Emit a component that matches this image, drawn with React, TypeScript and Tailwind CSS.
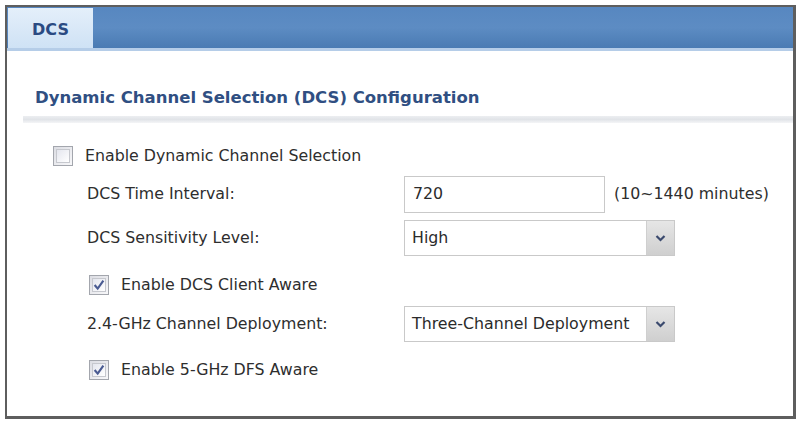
import React from "react";

const font = { fontFamily: "Tahoma, 'DejaVu Sans', 'Open Sans', sans-serif" };

const Checkbox = ({ checked }: { checked?: boolean }) => (
  <span className="flex h-[20px] w-[20px] items-center justify-center border border-[#a3a6ad] bg-gradient-to-br from-[#dcdde3] to-[#f7f7f9] p-[2px]">
    <span className="flex h-full w-full items-center justify-center border border-[#c6c8ce] bg-gradient-to-br from-[#e4e6ee] to-white">
      {checked && (
        <svg width="12" height="12" viewBox="0 0 11 11">
          <path d="M1.5 5.5 L4.3 8.8 L9.5 1.5" fill="none" stroke="#4a5b92" strokeWidth="2" />
        </svg>
      )}
    </span>
  </span>
);

const Select = ({ value }: { value: string }) => (
  <div className="flex h-[36px] w-[271px] border border-[#c9c9c9] bg-white">
    <div className="flex flex-1 items-center pl-[7px] text-[#2b2b2b]">{value}</div>
    <div className="flex w-[28px] items-center justify-center border-l border-[#cfcfcf] bg-gradient-to-b from-[#e6e6e6] to-[#cfcfcf]">
      <svg width="11" height="8" viewBox="0 0 11 8">
        <path d="M1.5 2 L5.5 6 L9.5 2" fill="none" stroke="#3b4a6e" strokeWidth="2.2" />
      </svg>
    </div>
  </div>
);

export default function App() {
  return (
    <div className="h-[421px] w-[801px] bg-white px-[5px] pb-[2px] pt-[5px]" style={font}>
      <div className="flex h-full flex-col border-2 border-[#5e5e5e] border-b-[3px] border-r-[3px]">
        {/* tab bar */}
        <div className="flex h-[44px] border-b-[3px] border-[#b5cde8] bg-gradient-to-b from-[#5787c0] via-[#5d8cc3] to-[#4a7bb3]">
          <div className="ml-[1px] mt-[1px] flex w-[85px] items-center justify-center bg-gradient-to-b from-[#e4effa] to-[#cfe2f5] pt-[3px] text-[16px] font-bold text-[#2a4a82]">
            DCS
          </div>
        </div>

        <div className="mt-[35px] pl-[28px] text-[16.5px] font-bold text-[#304f82]">
          Dynamic Channel Selection (DCS) Configuration
        </div>
        <div className="ml-[16px] mt-[5px] h-[7px] bg-gradient-to-b from-[#eceef1] via-[#e1e4e8] to-[#f4f5f7]" />

        <div className="flex flex-col text-[15.8px] text-[#2e2e2e]">
          <div className="mt-[15px] flex h-[37px] items-center gap-[12px] pl-[46px]">
            <Checkbox />
            <span>Enable Dynamic Channel Selection</span>
          </div>
          <div className="mt-[1px] flex h-[37px] items-center pl-[80px]">
            <span className="w-[317px]">DCS Time Interval:</span>
            <div className="flex h-[37px] w-[201px] items-center border border-[#c9c9c9] pl-[8px] text-[#2b2b2b]">720</div>
            <span className="ml-[9px]">(10~1440 minutes)</span>
          </div>
          <div className="mt-[7px] flex h-[36px] items-center pl-[80px]">
            <span className="w-[317px]">DCS Sensitivity Level:</span>
            <Select value="High" />
          </div>
          <div className="mt-[11px] flex h-[37px] items-center gap-[12px] pl-[82px]">
            <Checkbox checked />
            <span>Enable DCS Client Aware</span>
          </div>
          <div className="mt-[2px] flex h-[36px] items-center pl-[80px]">
            <span className="w-[317px]">2.4-GHz Channel Deployment:</span>
            <Select value="Three-Channel Deployment" />
          </div>
          <div className="mt-[10px] flex h-[37px] items-center gap-[12px] pl-[82px]">
            <Checkbox checked />
            <span>Enable 5-GHz DFS Aware</span>
          </div>
        </div>
      </div>
    </div>
  );
}
